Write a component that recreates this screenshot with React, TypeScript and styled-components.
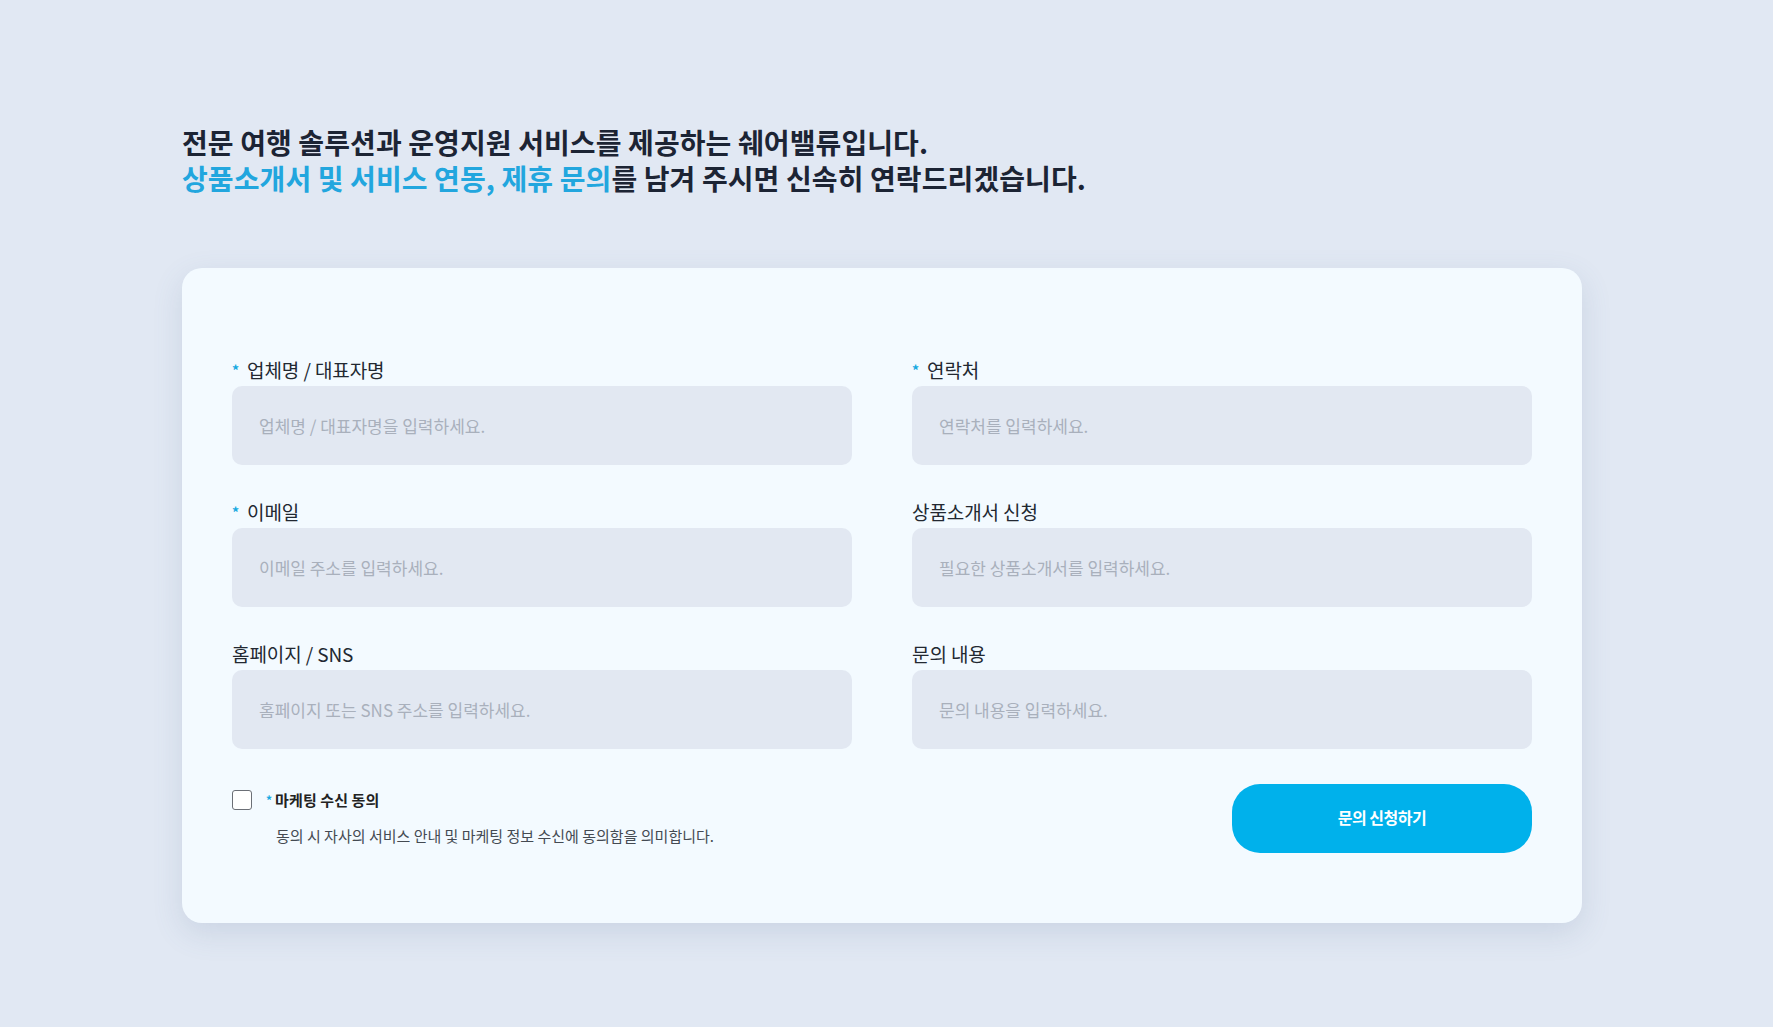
import React from 'react';
import styled, { createGlobalStyle } from 'styled-components';

const GlobalStyle = createGlobalStyle`
  html, body {
    margin: 0;
    padding: 0;
    background: #e1e8f3;
  }
  body {
    font-family: 'Noto Sans CJK KR', 'Noto Sans', sans-serif;
    color: #1c2434;
  }
  * {
    box-sizing: border-box;
  }
`;

const Page = styled.div`
  min-height: 1027px;
  padding: 124px 0 0 182px;
`;

const Wrap = styled.div`
  width: 1400px;
`;

const Heading = styled.h1`
  margin: 0 0 72px;
  font-size: 28px;
  line-height: 36px;
  font-weight: 700;
  letter-spacing: 0.1px;
  color: #1c2434;
`;

const Accent = styled.span`
  color: #22a6de;
`;

const Card = styled.form`
  background: #f3faff;
  border-radius: 20px;
  box-shadow: 0 10px 30px rgba(90, 110, 150, 0.16);
  padding: 90px 50px 70px;
`;

const Grid = styled.div`
  display: grid;
  grid-template-columns: 1fr 1fr;
  column-gap: 60px;
  row-gap: 35px;
`;

const Field = styled.label`
  display: flex;
  flex-direction: column;
  gap: 4px;
`;

const LabelText = styled.span`
  display: flex;
  align-items: center;
  font-size: 19px;
  line-height: 24px;
  letter-spacing: -0.1px;
  color: #222831;
`;

const Star = styled.span<{ small?: boolean }>`
  color: #17a9e1;
  font-size: ${({ small }) => (small ? '12px' : '14px')};
  font-weight: 700;
  margin-right: ${({ small }) => (small ? '3px' : '8px')};
  letter-spacing: 0;
`;

const Input = styled.input`
  height: 79px;
  border: none;
  outline: none;
  border-radius: 10px;
  background: #e2e8f2;
  padding: 0 27px;
  font-family: inherit;
  font-size: 17px;
  letter-spacing: 0;
  color: #222;

  &::placeholder {
    color: #a9b0bc;
  }
`;

const Bottom = styled.div`
  display: flex;
  justify-content: space-between;
  align-items: flex-start;
  margin-top: 35px;
`;

const Consent = styled.div`
  display: flex;
  align-items: flex-start;
  gap: 14px;
  padding-top: 6px;
`;

const Checkbox = styled.span`
  width: 20px;
  height: 20px;
  border: 1px solid #6b6f76;
  border-radius: 3px;
  background: #fff;
  flex-shrink: 0;
`;

const ConsentText = styled.div`
  display: flex;
  flex-direction: column;
  gap: 16px;
`;

const ConsentTitle = styled.div`
  display: flex;
  align-items: center;
  font-size: 15px;
  line-height: 20px;
  font-weight: 700;
  letter-spacing: 0.1px;
  color: #222;
`;

const ConsentDesc = styled.div`
  padding-left: 10px;
  font-size: 15px;
  line-height: 20px;
  letter-spacing: 0;
  color: #444a52;
`;

const Submit = styled.button`
  width: 300px;
  height: 69px;
  border: none;
  border-radius: 28px;
  background: #00b1eb;
  color: #fff;
  padding: 0 0 3px;
  font-family: inherit;
  font-size: 16px;
  font-weight: 700;
  letter-spacing: -0.5px;
  cursor: pointer;
`;

const fields = [
  { label: '업체명 / 대표자명', placeholder: '업체명 / 대표자명을 입력하세요.', required: true },
  { label: '연락처', placeholder: '연락처를 입력하세요.', required: true },
  { label: '이메일', placeholder: '이메일 주소를 입력하세요.', required: true },
  { label: '상품소개서 신청', placeholder: '필요한 상품소개서를 입력하세요.', required: false },
  { label: '홈페이지 / SNS', placeholder: '홈페이지 또는 SNS 주소를 입력하세요.', required: false },
  { label: '문의 내용', placeholder: '문의 내용을 입력하세요.', required: false }
];

export default function App() {
  return (
    <>
      <GlobalStyle />
      <Page>
        <Wrap>
          <Heading>
            전문 여행 솔루션과 운영지원 서비스를 제공하는 쉐어밸류입니다.
            <br />
            <Accent>상품소개서 및 서비스 연동, 제휴 문의</Accent>를 남겨 주시면 신속히 연락드리겠습니다.
          </Heading>
          <Card onSubmit={(e) => e.preventDefault()}>
            <Grid>
              {fields.map((f) => (
                <Field key={f.label}>
                  <LabelText>
                    {f.required && <Star>*</Star>}
                    {f.label}
                  </LabelText>
                  <Input placeholder={f.placeholder} />
                </Field>
              ))}
            </Grid>
            <Bottom>
              <Consent>
                <Checkbox />
                <ConsentText>
                  <ConsentTitle>
                    <Star small>*</Star>마케팅 수신 동의
                  </ConsentTitle>
                  <ConsentDesc>동의 시 자사의 서비스 안내 및 마케팅 정보 수신에 동의함을 의미합니다.</ConsentDesc>
                </ConsentText>
              </Consent>
              <Submit type="submit">문의 신청하기</Submit>
            </Bottom>
          </Card>
        </Wrap>
      </Page>
    </>
  );
}
